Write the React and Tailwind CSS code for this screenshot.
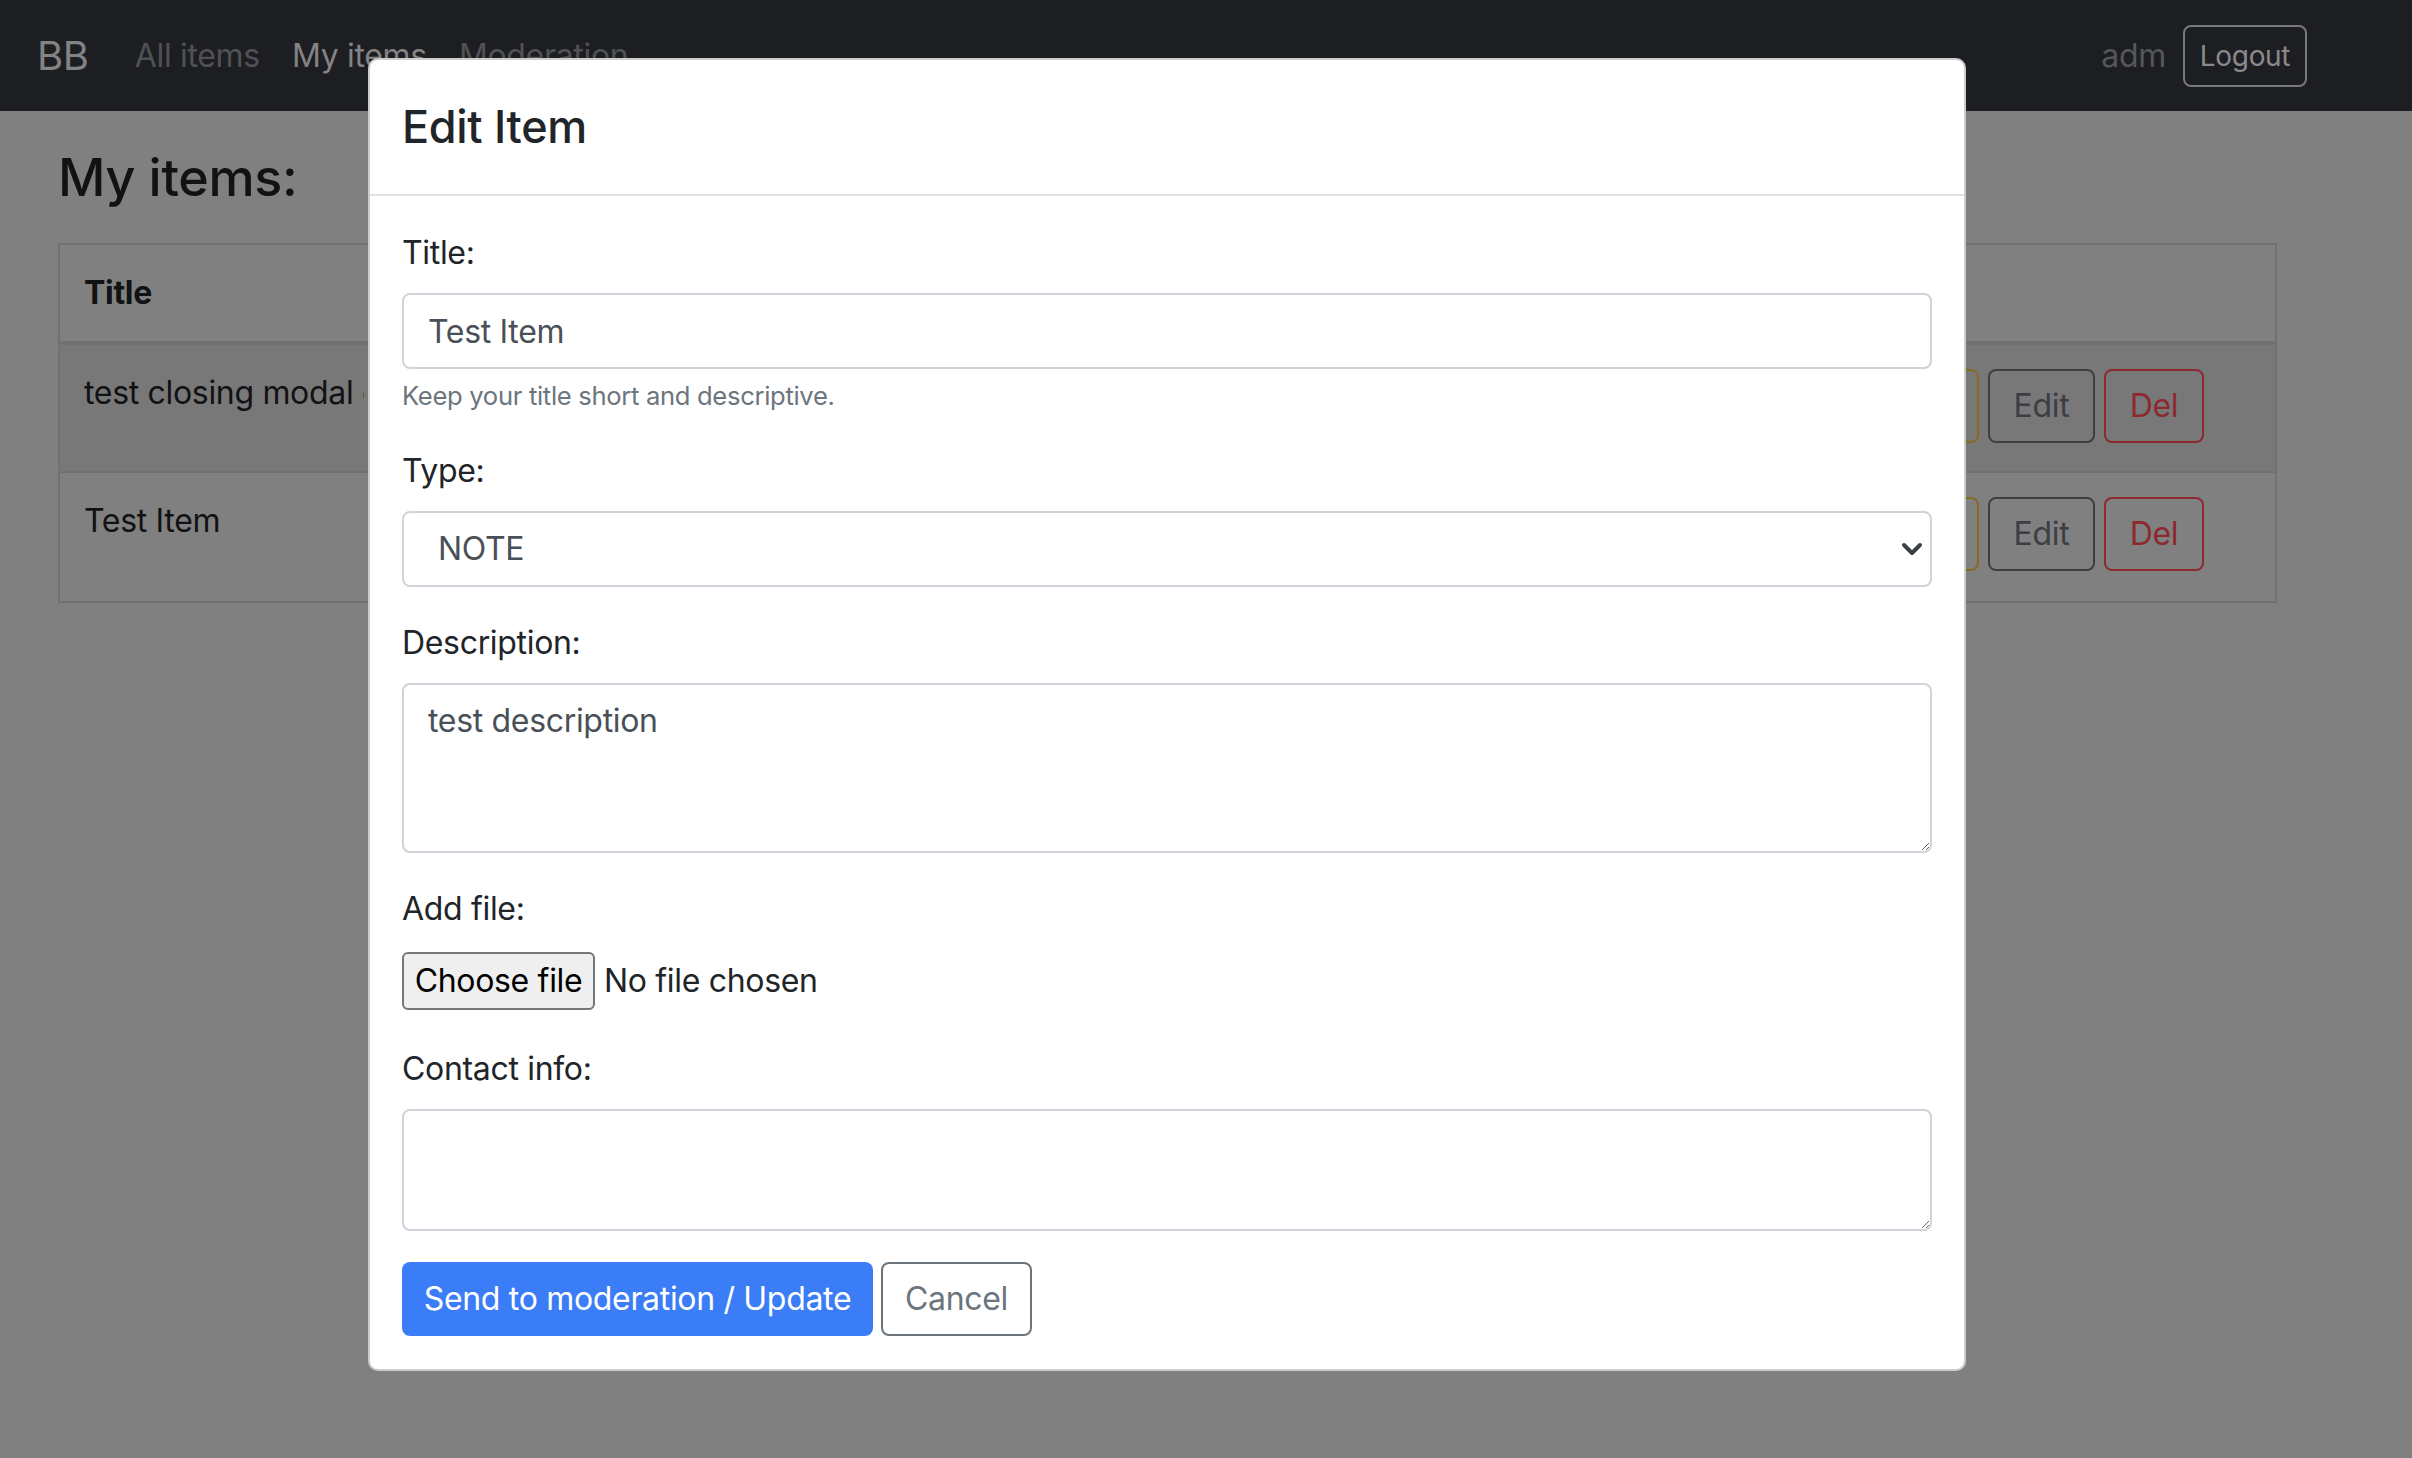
import { useState } from 'react';

const rows = [
  { title: 'test closing modal example', striped: true },
  { title: 'Test Item', striped: false },
];

function Field({ label, children, hint }) {
  return (
    <div className="mb-[32px]">
      <label className="block text-[32px] leading-[48px] text-[#212529] mb-[16px]">{label}</label>
      {children}
      {hint && <p className="mt-[8px] text-[25.6px] leading-[38.4px] text-[#6c757d]">{hint}</p>}
    </div>
  );
}

export default function App() {
  const [title, setTitle] = useState('Test Item');
  const [desc, setDesc] = useState('test description');
  const [contact, setContact] = useState('');

  return (
    <div className="relative w-full h-[1458px] bg-[#808080] overflow-hidden tracking-[-0.02em]" style={{ fontFamily: 'Inter, "Liberation Sans", sans-serif' }}>
      {/* Navbar (dimmed by backdrop) */}
      <nav className="h-[111px] bg-[#1d1e22] flex items-center pl-[37px] pr-[105px]">
        <span className="text-[40px] leading-[60px] text-[#838383]">BB</span>
        <div className="flex ml-[30px]">
          <a className="px-[16px] text-[32px] leading-[48px] text-[#505155]">All items</a>
          <a className="px-[16px] text-[32px] leading-[48px] text-[#838383]">My items</a>
          <a className="px-[16px] text-[32px] leading-[48px] text-[#505155]">Moderation</a>
        </div>
        <div className="ml-auto flex items-center gap-[17px]">
          <span className="text-[32px] leading-[48px] text-[#55565a]">adm</span>
          <button className="h-[62px] w-[124px] border-2 border-[#77787b] rounded-[8px] text-[28px] text-[#8a8a8a]">Logout</button>
        </div>
      </nav>

      {/* Page */}
      <main className="pl-[58px] pr-[135px] pt-[34px]">
        <h3 className="text-[52px] leading-[65px] font-medium text-[#111214]">My items:</h3>
        <div className="mt-[33px] border-2 border-[#6f7173]">
          <div className="flex h-[100px] border-b-4 border-[#6f7173]">
            <div className="flex-1 px-[24px] pt-[24px] text-[32px] leading-[48px] font-bold text-[#111214]">Title</div>
            <div className="w-[447px] border-l-2 border-[#6f7173]" />
          </div>
          {rows.map((r, i) => (
            <div
              key={i}
              className={`flex h-[128px] ${i === 0 ? 'border-b-2 border-[#6f7173] bg-[#787878]' : ''}`}
            >
              <div className="flex-1 px-[24px] pt-[24px]">
                <div className="w-[280px] text-[32px] leading-[48px] text-[#111214] whitespace-nowrap overflow-hidden">{r.title}</div>
              </div>
              <div className="w-[447px] border-l-2 border-[#6f7173] pl-[22px] pt-[24px] flex gap-[9px] items-start">
                <button className="w-[127px] h-[74px] border-2 border-[#8a6a1e] rounded-[8px] text-[32px] text-[#8a6a1e]">Files</button>
                <button className="w-[107px] h-[74px] border-2 border-[#3b3f44] rounded-[8px] text-[32px] text-[#3b3f44]">Edit</button>
                <button className="w-[100px] h-[74px] border-2 border-[#8b2a30] rounded-[8px] text-[32px] text-[#8b2a30]">Del</button>
              </div>
            </div>
          ))}
        </div>
      </main>

      {/* Modal */}
      <div className="absolute left-[368px] top-[58px] w-[1598px] bg-white border-2 border-black/20 rounded-[10px]">
        <div className="h-[136px] px-[32px] flex items-center border-b-2 border-[#dee2e6]">
          <h5 className="text-[45px] leading-[72px] font-medium text-[#212529]">Edit Item</h5>
        </div>
        <div className="px-[32px] pt-[33px] pb-[33px]">
          <Field label="Title:" hint="Keep your title short and descriptive.">
            <input
              value={title}
              onChange={(e) => setTitle(e.target.value)}
              className="block w-full h-[76px] px-[24px] border-2 border-[#ced4da] rounded-[8px] text-[32px] text-[#495057] outline-none"
            />
          </Field>
          <Field label="Type:">
            <div className="flex items-center h-[76px] border-2 border-[#ced4da] rounded-[8px] pl-[34px] pr-[4px]">
              <select className="flex-1 appearance-none bg-transparent outline-none text-[32px] text-[#495057]">
                <option>NOTE</option>
              </select>
              <svg width="24" height="18" viewBox="0 0 24 18" className="mr-[2px]">
                <polyline points="4,5 12,13 20,5" fill="none" stroke="#3a3f45" strokeWidth="4" strokeLinecap="round" strokeLinejoin="round" />
              </svg>
            </div>
          </Field>
          <Field label="Description:">
            <textarea
              value={desc}
              onChange={(e) => setDesc(e.target.value)}
              rows={3}
              className="block w-full h-[170px] px-[24px] py-[12px] border-2 border-[#ced4da] rounded-[8px] text-[32px] leading-[48px] text-[#495057] outline-none resize-y"
            />
          </Field>
          <Field label="Add file:">
            <div className="h-[64px] flex items-center">
              <button className="w-[193px] h-[58px] bg-[#efefef] border-2 border-[#767676] rounded-[6px] text-[32px] text-black">Choose file</button>
              <span className="ml-[9px] text-[32px] text-[#212529]">No file chosen</span>
            </div>
          </Field>
          <Field label="Contact info:">
            <textarea
              value={contact}
              onChange={(e) => setContact(e.target.value)}
              rows={2}
              className="block w-full h-[122px] px-[24px] py-[12px] border-2 border-[#ced4da] rounded-[8px] text-[32px] leading-[48px] text-[#495057] outline-none resize-y"
            />
          </Field>
          <div className="flex gap-[8px] -mt-[1px]">
            <button className="w-[471px] h-[74px] bg-[#3a7df6] rounded-[8px] text-[32px] text-white">Send to moderation / Update</button>
            <button className="w-[151px] h-[74px] border-2 border-[#6c757d] rounded-[8px] text-[32px] text-[#6c757d]">Cancel</button>
          </div>
        </div>
      </div>
    </div>
  );
}
